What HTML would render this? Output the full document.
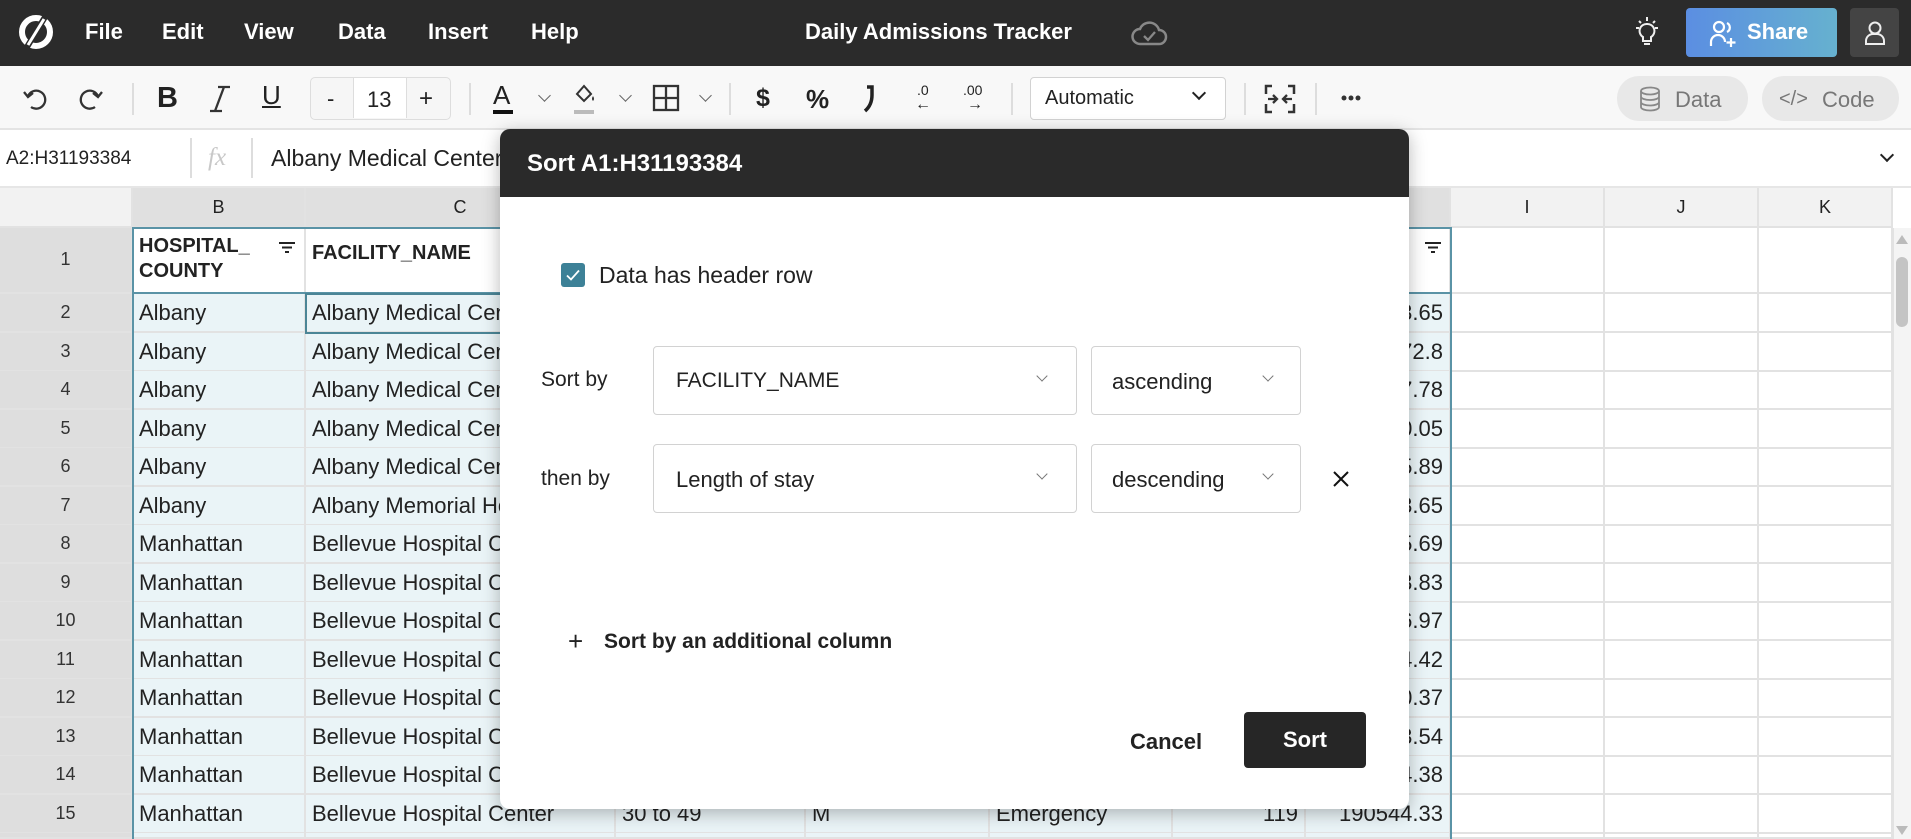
<!DOCTYPE html>
<html style="overflow:hidden;height:839px"><head><meta charset="utf-8">
<style>
*{box-sizing:border-box;margin:0;padding:0}
body{width:1911px;height:839px;overflow:hidden;position:relative;background:#fff;font-family:"Liberation Sans",sans-serif;color:#222}
.abs{position:absolute}
#top{left:0;top:0;width:1911px;height:66px;background:#2b2b2b;color:#fff}
.menu{position:absolute;top:19px;font-size:22px;font-weight:bold}
#tb{left:0;top:66px;width:1911px;height:64px;background:#f8f8f8;border-bottom:2px solid #e4e4e4}
.sep{position:absolute;top:17px;width:2px;height:32px;background:#ddd}
#fb{left:0;top:130px;width:1911px;height:58px;background:#fff;border-bottom:2px solid #e6e6e6}
#grid{position:absolute;left:0;top:0;width:1911px;height:839px;overflow:hidden}
.row{position:absolute;left:0;height:39px;display:flex}
.c{height:100%;border-right:2px solid #e2e2e2;border-bottom:2px solid #e2e2e2;font-size:22px;line-height:37px;padding-left:6px;white-space:nowrap;overflow:hidden}
.rh{width:133px;background:#dedede;text-align:center;padding:0;font-size:18px;color:#333}
.w1{width:173px}.w2{width:310px}.w3{width:190px}.w4{width:184px}.w5{width:183px}.w6{width:133px}.w7{width:145px}.w8{width:154px}.w9{width:154px}.w10{width:134px}
.s{background:#eaf4f7}
.r{text-align:right;padding-right:6px;padding-left:0}
.sel{position:absolute;border:1.5px solid #d2d2d2;background:#fff;border-radius:4px}
.chev{position:absolute;width:9px;height:9px;border-right:1.8px solid #666;border-bottom:1.8px solid #666;transform:rotate(45deg)}
</style></head><body>

<div id="grid">
<!-- column headers -->
<div class="row" style="top:188px;height:40px">
 <div class="c rh" style="background:#f2f2f2"></div>
 <div class="c w1" style="background:#e0e0e0;text-align:center;padding:0;font-size:18px;line-height:38px">B</div>
 <div class="c w2" style="background:#e0e0e0;text-align:center;padding:0;font-size:18px;line-height:38px">C</div>
 <div class="c w3" style="background:#e0e0e0"></div><div class="c w4" style="background:#e0e0e0"></div><div class="c w5" style="background:#e0e0e0"></div><div class="c w6" style="background:#e0e0e0"></div><div class="c w7" style="background:#e0e0e0"></div>
 <div class="c w8" style="background:#f2f2f2;text-align:center;padding:0;font-size:18px;line-height:38px">I</div>
 <div class="c w9" style="background:#f2f2f2;text-align:center;padding:0;font-size:18px;line-height:38px">J</div>
 <div class="c w10" style="background:#f2f2f2;text-align:center;padding:0;font-size:18px;line-height:38px">K</div>
</div>

<div class="row" style="top:228px;height:66px">
 <div class="c rh" style="line-height:62px">1</div>
 <div class="c w1" style="font-weight:bold;font-size:20px;line-height:25px;padding-top:6px">HOSPITAL_<br>COUNTY</div>
 <div class="c w2" style="font-weight:bold;font-size:20px;line-height:50px">FACILITY_NAME</div>
 <div class="c w3"></div><div class="c w4"></div><div class="c w5"></div><div class="c w6"></div><div class="c w7"></div><div class="c w8"></div><div class="c w9"></div><div class="c w10"></div>
</div>
<svg class="abs" style="left:278px;top:241px" width="18" height="14" viewBox="0 0 18 14"><path d="M1 2h16M4 6.5h10M7 11h4" stroke="#222" stroke-width="2"/></svg>
<svg class="abs" style="left:1424px;top:241px" width="18" height="14" viewBox="0 0 18 14"><path d="M1 2h16M4 6.5h10M7 11h4" stroke="#222" stroke-width="2"/></svg>

<div class="row" style="top:294px"><div class="c rh">2</div><div class="c w1 s">Albany</div><div class="c w2 s">Albany Medical Center</div><div class="c w3 s"></div><div class="c w4 s"></div><div class="c w5 s"></div><div class="c w6 s"></div><div class="c w7 s r">190543.65</div><div class="c w8"></div><div class="c w9"></div><div class="c w10"></div></div>
<div class="row" style="top:332.5px"><div class="c rh">3</div><div class="c w1 s">Albany</div><div class="c w2 s">Albany Medical Center</div><div class="c w3 s"></div><div class="c w4 s"></div><div class="c w5 s"></div><div class="c w6 s"></div><div class="c w7 s r">190572.8</div><div class="c w8"></div><div class="c w9"></div><div class="c w10"></div></div>
<div class="row" style="top:371px"><div class="c rh">4</div><div class="c w1 s">Albany</div><div class="c w2 s">Albany Medical Center</div><div class="c w3 s"></div><div class="c w4 s"></div><div class="c w5 s"></div><div class="c w6 s"></div><div class="c w7 s r">190577.78</div><div class="c w8"></div><div class="c w9"></div><div class="c w10"></div></div>
<div class="row" style="top:409.5px"><div class="c rh">5</div><div class="c w1 s">Albany</div><div class="c w2 s">Albany Medical Center</div><div class="c w3 s"></div><div class="c w4 s"></div><div class="c w5 s"></div><div class="c w6 s"></div><div class="c w7 s r">190540.05</div><div class="c w8"></div><div class="c w9"></div><div class="c w10"></div></div>
<div class="row" style="top:448px"><div class="c rh">6</div><div class="c w1 s">Albany</div><div class="c w2 s">Albany Medical Center</div><div class="c w3 s"></div><div class="c w4 s"></div><div class="c w5 s"></div><div class="c w6 s"></div><div class="c w7 s r">190545.89</div><div class="c w8"></div><div class="c w9"></div><div class="c w10"></div></div>
<div class="row" style="top:486.5px"><div class="c rh">7</div><div class="c w1 s">Albany</div><div class="c w2 s">Albany Memorial Hospital</div><div class="c w3 s"></div><div class="c w4 s"></div><div class="c w5 s"></div><div class="c w6 s"></div><div class="c w7 s r">190543.65</div><div class="c w8"></div><div class="c w9"></div><div class="c w10"></div></div>
<div class="row" style="top:525px"><div class="c rh">8</div><div class="c w1 s">Manhattan</div><div class="c w2 s">Bellevue Hospital Center</div><div class="c w3 s"></div><div class="c w4 s"></div><div class="c w5 s"></div><div class="c w6 s"></div><div class="c w7 s r">190545.69</div><div class="c w8"></div><div class="c w9"></div><div class="c w10"></div></div>
<div class="row" style="top:563.5px"><div class="c rh">9</div><div class="c w1 s">Manhattan</div><div class="c w2 s">Bellevue Hospital Center</div><div class="c w3 s"></div><div class="c w4 s"></div><div class="c w5 s"></div><div class="c w6 s"></div><div class="c w7 s r">190543.83</div><div class="c w8"></div><div class="c w9"></div><div class="c w10"></div></div>
<div class="row" style="top:602px"><div class="c rh">10</div><div class="c w1 s">Manhattan</div><div class="c w2 s">Bellevue Hospital Center</div><div class="c w3 s"></div><div class="c w4 s"></div><div class="c w5 s"></div><div class="c w6 s"></div><div class="c w7 s r">190546.97</div><div class="c w8"></div><div class="c w9"></div><div class="c w10"></div></div>
<div class="row" style="top:640.5px"><div class="c rh">11</div><div class="c w1 s">Manhattan</div><div class="c w2 s">Bellevue Hospital Center</div><div class="c w3 s"></div><div class="c w4 s"></div><div class="c w5 s"></div><div class="c w6 s"></div><div class="c w7 s r">190544.42</div><div class="c w8"></div><div class="c w9"></div><div class="c w10"></div></div>
<div class="row" style="top:679px"><div class="c rh">12</div><div class="c w1 s">Manhattan</div><div class="c w2 s">Bellevue Hospital Center</div><div class="c w3 s"></div><div class="c w4 s"></div><div class="c w5 s"></div><div class="c w6 s"></div><div class="c w7 s r">190540.37</div><div class="c w8"></div><div class="c w9"></div><div class="c w10"></div></div>
<div class="row" style="top:717.5px"><div class="c rh">13</div><div class="c w1 s">Manhattan</div><div class="c w2 s">Bellevue Hospital Center</div><div class="c w3 s"></div><div class="c w4 s"></div><div class="c w5 s"></div><div class="c w6 s"></div><div class="c w7 s r">190543.54</div><div class="c w8"></div><div class="c w9"></div><div class="c w10"></div></div>
<div class="row" style="top:756px"><div class="c rh">14</div><div class="c w1 s">Manhattan</div><div class="c w2 s">Bellevue Hospital Center</div><div class="c w3 s"></div><div class="c w4 s"></div><div class="c w5 s"></div><div class="c w6 s"></div><div class="c w7 s r">190544.38</div><div class="c w8"></div><div class="c w9"></div><div class="c w10"></div></div>
<div class="row" style="top:794.5px"><div class="c rh">15</div><div class="c w1 s">Manhattan</div><div class="c w2 s">Bellevue Hospital Center</div><div class="c w3 s">30 to 49</div><div class="c w4 s">M</div><div class="c w5 s">Emergency</div><div class="c w6 s r">119</div><div class="c w7 s r">190544.33</div><div class="c w8"></div><div class="c w9"></div><div class="c w10"></div></div>
<div class="row" style="top:833px;height:6px"><div class="c rh"></div><div class="c w1 s"></div><div class="c w2 s"></div><div class="c w3 s"></div><div class="c w4 s"></div><div class="c w5 s"></div><div class="c w6 s"></div><div class="c w7 s"></div><div class="c w8"></div><div class="c w9"></div><div class="c w10"></div></div>

<div class="abs" style="left:132px;top:227px;width:1320px;height:640px;border:2px solid #5a93a6"></div>
<div class="abs" style="left:132px;top:292px;width:1320px;height:2px;background:#5a93a6"></div>
<div class="abs" style="left:305px;top:293px;width:312px;height:41px;border:2.5px solid #4b8596"></div>

<div class="abs" style="left:1893px;top:228px;width:18px;height:611px;background:#f4f4f4;border-left:1px solid #e2e2e2"></div>
<div class="abs" style="left:1896px;top:235px;width:0;height:0;border-left:6px solid transparent;border-right:6px solid transparent;border-bottom:9px solid #bbb"></div>
<div class="abs" style="left:1896px;top:257px;width:12px;height:70px;border-radius:6px;background:#c4c4c4"></div>
<div class="abs" style="left:1896px;top:826px;width:0;height:0;border-left:6px solid transparent;border-right:6px solid transparent;border-top:9px solid #bbb"></div>
</div>

<!-- top bar -->
<div id="top" class="abs">
 <svg class="abs" style="left:16px;top:13px" width="40" height="38" viewBox="0 0 40 38"><circle cx="20" cy="19" r="14" fill="none" stroke="#fff" stroke-width="6"/><path d="M29 4 L11 34" stroke="#2b2b2b" stroke-width="6"/><path d="M28 6 L12 32" stroke="#fff" stroke-width="3"/></svg>
 <span class="menu" style="left:85px">File</span>
 <span class="menu" style="left:162px">Edit</span>
 <span class="menu" style="left:244px">View</span>
 <span class="menu" style="left:338px">Data</span>
 <span class="menu" style="left:428px">Insert</span>
 <span class="menu" style="left:531px">Help</span>
 <span class="menu" style="left:805px">Daily Admissions Tracker</span>
 <svg class="abs" style="left:1130px;top:18px" width="38" height="30" viewBox="0 0 38 30"><path d="M10 26 H29 A7 7 0 0 0 29 12 A10 10 0 0 0 10 11 A7.5 7.5 0 0 0 10 26Z" fill="none" stroke="#888" stroke-width="2.5"/><path d="M14 18 l4 4 l7 -8" fill="none" stroke="#888" stroke-width="2.3"/></svg>
 <svg class="abs" style="left:1632px;top:16px" width="30" height="34" viewBox="0 0 30 34"><path d="M15 8 a7 7 0 0 0 -4 13 v4 h8 v-4 a7 7 0 0 0 -4 -13z" fill="none" stroke="#eee" stroke-width="2"/><path d="M12 28h6M15 1v4M4 12h3M23 12h3M7 5l2 2M23 5l-2 2" stroke="#eee" stroke-width="2"/></svg>
 <div class="abs" style="left:1686px;top:8px;width:151px;height:49px;border-radius:4px;background:linear-gradient(90deg,#5b8ee2,#66b1cf)">
  <svg class="abs" style="left:23px;top:12px" width="30" height="28" viewBox="0 0 30 28"><circle cx="10" cy="7" r="5" fill="none" stroke="#fff" stroke-width="2.2"/><path d="M2 26 v-4 a7 7 0 0 1 14 0" fill="none" stroke="#fff" stroke-width="2.2"/><path d="M18 3 a5 5 0 0 1 0 9" fill="none" stroke="#fff" stroke-width="2.2"/><path d="M22 18v9M17.5 22.5h9" stroke="#fff" stroke-width="2.2"/></svg>
  <span class="abs" style="left:61px;top:11px;font-size:22px;font-weight:bold;color:#fff">Share</span>
 </div>
 <div class="abs" style="left:1850px;top:8px;width:49px;height:49px;border-radius:4px;background:#444">
  <svg class="abs" style="left:13px;top:12px" width="24" height="26" viewBox="0 0 24 26"><circle cx="12" cy="8" r="5.5" fill="none" stroke="#eee" stroke-width="2"/><path d="M3 24 v-3 a7 7 0 0 1 7-7 h4 a7 7 0 0 1 7 7 v3z" fill="none" stroke="#eee" stroke-width="2"/></svg>
 </div>
</div>

<!-- toolbar -->
<div id="tb" class="abs">
 <svg class="abs" style="left:22px;top:20px" width="26" height="26" viewBox="0 0 26 26"><path d="M6 10 A9 9 0 1 1 9 21" fill="none" stroke="#333" stroke-width="2.3"/><path d="M2 6 L6 11 L11 7" fill="none" stroke="#333" stroke-width="2.3"/></svg>
 <svg class="abs" style="left:78px;top:20px" width="26" height="26" viewBox="0 0 26 26"><path d="M20 10 A9 9 0 1 0 17 21" fill="none" stroke="#333" stroke-width="2.3"/><path d="M24 6 L20 11 L15 7" fill="none" stroke="#333" stroke-width="2.3"/></svg>
 <div class="sep" style="left:132px"></div>
 <span class="abs" style="left:157px;top:16px;font-size:29px;font-weight:bold">B</span>
 <svg class="abs" style="left:208px;top:19px" width="24" height="28" viewBox="0 0 24 28"><path d="M16 2 L7 26 M10 2h12 M2 26h12" stroke="#333" stroke-width="2.3"/></svg>
 <span class="abs" style="left:262px;top:14px;font-size:26px;text-decoration:underline">U</span>
 <div class="abs" style="left:310px;top:11px;width:141px;height:43px;border:1.5px solid #ddd;border-radius:5px;background:#f6f6f6">
  <div class="abs" style="left:42px;top:0;width:54px;height:40px;background:#fff;border-left:1.5px solid #ddd;border-right:1.5px solid #ddd"></div>
  <span class="abs" style="left:16px;top:8px;font-size:22px">-</span>
  <span class="abs" style="left:56px;top:9px;font-size:22px">13</span>
  <span class="abs" style="left:108px;top:7px;font-size:24px">+</span>
 </div>
 <div class="sep" style="left:469px"></div>
 <span class="abs" style="left:493px;top:14px;font-size:26px">A</span>
 <div class="abs" style="left:493px;top:44px;width:20px;height:4px;background:#111"></div>
 <div class="chev" style="left:540px;top:25px"></div>
 <svg class="abs" style="left:574px;top:17px" width="24" height="24" viewBox="0 0 24 24"><path d="M10 3 L3 11 L10 18 L17 11Z" fill="none" stroke="#333" stroke-width="2"/><path d="M19 13 q2 3 0 5 q-2 -2 0 -5" fill="#333"/></svg>
 <div class="abs" style="left:574px;top:44px;width:20px;height:4px;background:#bbb"></div>
 <div class="chev" style="left:621px;top:25px"></div>
 <svg class="abs" style="left:652px;top:18px" width="28" height="28" viewBox="0 0 28 28"><rect x="2" y="2" width="24" height="24" fill="none" stroke="#333" stroke-width="2.3"/><path d="M14 2v24M2 14h24" stroke="#333" stroke-width="2.3"/></svg>
 <div class="chev" style="left:701px;top:25px"></div>
 <div class="sep" style="left:729px"></div>
 <span class="abs" style="left:756px;top:18px;font-size:25px;font-weight:bold">$</span>
 <span class="abs" style="left:806px;top:18px;font-size:26px;font-weight:bold">%</span>
 <svg class="abs" style="left:862px;top:19px" width="14" height="28" viewBox="0 0 14 28"><path d="M5 2 h5 v8 q0 10 -7 16" fill="none" stroke="#222" stroke-width="3.5"/></svg>
 <span class="abs" style="left:917px;top:16px;font-size:14px">.0</span>
 <span class="abs" style="left:915px;top:30px;font-size:16px">←</span>
 <span class="abs" style="left:963px;top:16px;font-size:14px">.00</span>
 <span class="abs" style="left:967px;top:30px;font-size:16px">→</span>
 <div class="sep" style="left:1011px"></div>
 <div class="sel" style="left:1030px;top:11px;width:196px;height:43px;background:#fff">
  <span class="abs" style="left:14px;top:9px;font-size:20px">Automatic</span>
  <div class="chev" style="left:163px;top:10px;border-color:#222;width:10px;height:10px;border-width:2.5px"></div>
 </div>
 <div class="sep" style="left:1244px"></div>
 <svg class="abs" style="left:1263px;top:18px" width="34" height="30" viewBox="0 0 34 30"><path d="M9 2H3v8M3 20v8h6M25 2h6v8M31 20v8h-6" fill="none" stroke="#333" stroke-width="2.5"/><path d="M5 15h9M10 11l4 4-4 4M29 15h-9M24 11l-4 4 4 4" fill="none" stroke="#333" stroke-width="2.3"/></svg>
 <div class="sep" style="left:1315px"></div>
 <svg class="abs" style="left:1341px;top:29px" width="20" height="6" viewBox="0 0 20 6"><circle cx="3" cy="3" r="2.5" fill="#333"/><circle cx="10" cy="3" r="2.5" fill="#333"/><circle cx="17" cy="3" r="2.5" fill="#333"/></svg>
 <div class="abs" style="left:1617px;top:10px;width:131px;height:45px;border-radius:22px;background:#e8e8e8">
  <svg class="abs" style="left:22px;top:10px" width="22" height="26" viewBox="0 0 22 26"><ellipse cx="11" cy="5" rx="9" ry="3.5" fill="none" stroke="#888" stroke-width="1.8"/><path d="M2 5v16c0 2 4 3.5 9 3.5s9-1.5 9-3.5V5M2 10.5c0 2 4 3.5 9 3.5s9-1.5 9-3.5M2 16c0 2 4 3.5 9 3.5s9-1.5 9-3.5" fill="none" stroke="#888" stroke-width="1.8"/></svg>
  <span class="abs" style="left:58px;top:11px;font-size:22px;color:#777">Data</span>
 </div>
 <div class="abs" style="left:1762px;top:10px;width:137px;height:45px;border-radius:22px;background:#e8e8e8">
  <span class="abs" style="left:17px;top:12px;font-size:20px;color:#777">&lt;/&gt;</span>
  <span class="abs" style="left:60px;top:11px;font-size:22px;color:#777">Code</span>
 </div>
</div>

<!-- formula bar -->
<div id="fb" class="abs">
 <span class="abs" style="left:6px;top:18px;font-size:19px">A2:H31193384</span>
 <div class="abs" style="left:190px;top:8px;width:2px;height:40px;background:#ddd"></div>
 <span class="abs" style="left:208px;top:14px;font-size:25px;font-style:italic;color:#c8c8c8;font-family:'Liberation Serif',serif">fx</span>
 <div class="abs" style="left:251px;top:8px;width:2px;height:40px;background:#ddd"></div>
 <span class="abs" style="left:271px;top:15px;font-size:23px">Albany Medical Center</span>
 <div class="chev" style="left:1882px;top:20px;border-color:#222;width:10px;height:10px;border-width:2.3px"></div>
</div>

<!-- dialog -->
<div class="abs" style="left:500px;top:129px;width:909px;height:680px;background:#fff;border-radius:10px;box-shadow:0 4px 18px rgba(0,0,0,.28);overflow:hidden">
 <div class="abs" style="left:0;top:0;width:909px;height:68px;background:#2a2a2a"></div>
 <span class="abs" style="left:27px;top:21px;font-size:24px;font-weight:bold;color:#fff">Sort A1:H31193384</span>
 <div class="abs" style="left:61px;top:134px;width:24px;height:24px;border-radius:3px;background:#3d8197">
  <svg width="24" height="24" viewBox="0 0 24 24"><path d="M6 12.5l4 4 8-9" fill="none" stroke="#fff" stroke-width="1.8"/></svg>
 </div>
 <span class="abs" style="left:99px;top:133px;font-size:23px">Data has header row</span>
 <span class="abs" style="left:41px;top:239px;font-size:21px">Sort by</span>
 <div class="sel" style="left:153px;top:217px;width:424px;height:69px">
  <span class="abs" style="left:22px;top:22px;font-size:21px">FACILITY_NAME</span>
  <div class="chev" style="left:384px;top:25px;width:8px;height:8px;border-width:1.5px;border-color:#777"></div>
 </div>
 <div class="sel" style="left:591px;top:217px;width:210px;height:69px">
  <span class="abs" style="left:20px;top:22px;font-size:22px">ascending</span>
  <div class="chev" style="left:172px;top:25px;width:8px;height:8px;border-width:1.5px;border-color:#777"></div>
 </div>
 <span class="abs" style="left:41px;top:338px;font-size:21px">then by</span>
 <div class="sel" style="left:153px;top:315px;width:424px;height:69px">
  <span class="abs" style="left:22px;top:22px;font-size:22px">Length of stay</span>
  <div class="chev" style="left:384px;top:25px;width:8px;height:8px;border-width:1.5px;border-color:#777"></div>
 </div>
 <div class="sel" style="left:591px;top:315px;width:210px;height:69px">
  <span class="abs" style="left:20px;top:22px;font-size:22px">descending</span>
  <div class="chev" style="left:172px;top:25px;width:8px;height:8px;border-width:1.5px;border-color:#777"></div>
 </div>
 <svg class="abs" style="left:832px;top:341px" width="18" height="18" viewBox="0 0 18 18"><path d="M2 2l14 14M16 2L2 16" stroke="#111" stroke-width="2"/></svg>
 <span class="abs" style="left:68px;top:499px;font-size:26px;line-height:26px">+</span>
 <span class="abs" style="left:104px;top:501px;font-size:21px;font-weight:bold">Sort by an additional column</span>
 <span class="abs" style="left:630px;top:600px;font-size:22px;font-weight:bold">Cancel</span>
 <div class="abs" style="left:744px;top:583px;width:122px;height:56px;border-radius:4px;background:#262626;color:#fff;font-size:22px;font-weight:bold;text-align:center;line-height:56px">Sort</div>
</div>
</body></html>
